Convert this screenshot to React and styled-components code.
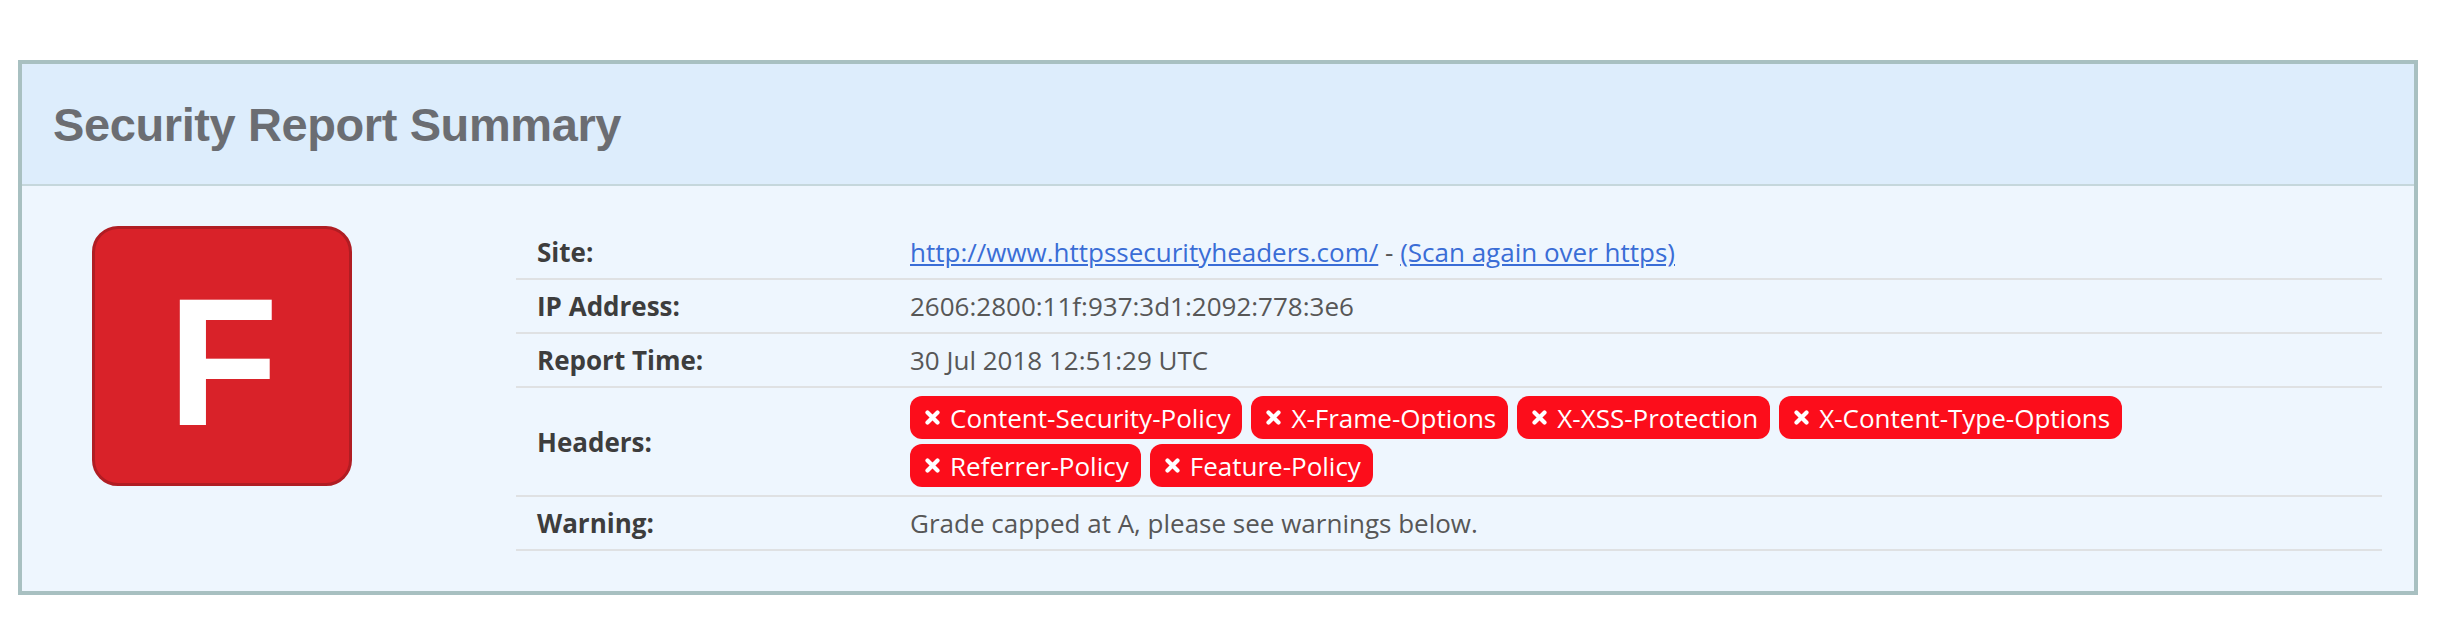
import styled, { createGlobalStyle } from "styled-components";

const GlobalStyle = createGlobalStyle`
  body {
    margin: 0;
    background: #ffffff;
    font-family: "Open Sans", "Noto Sans", sans-serif;
  }
`;

const rows = [
  { label: "Site:", kind: "site" },
  { label: "IP Address:", value: "2606:2800:11f:937:3d1:2092:778:3e6" },
  { label: "Report Time:", value: "30 Jul 2018 12:51:29 UTC" },
  { label: "Headers:", kind: "headers" },
  { label: "Warning:", value: "Grade capped at A, please see warnings below." },
];

const missingHeaders = [
  ["Content-Security-Policy", "X-Frame-Options", "X-XSS-Protection", "X-Content-Type-Options"],
  ["Referrer-Policy", "Feature-Policy"],
];

function CrossIcon() {
  return (
    <svg width="15" height="15" viewBox="0 0 15 15">
      <path d="M2.5 2.5 L12.5 12.5 M12.5 2.5 L2.5 12.5" stroke="#fff" strokeWidth="4.2" strokeLinecap="round" />
    </svg>
  );
}

export default function App() {
  return (
    <Page>
      <GlobalStyle />
      <Panel>
        <PanelHeader>
          <Title>Security Report Summary</Title>
        </PanelHeader>
        <PanelBody>
          <GradeBox>F</GradeBox>
          <ReportTable>
            {rows.map((row) => (
              <Row key={row.label}>
                <Label>{row.label}</Label>
                <Value $tall={row.kind === "headers"}>
                  {row.kind === "site" && (
                    <span>
                      <Link href="#">http://www.httpssecurityheaders.com/</Link>
                      <Sep> - </Sep>
                      <Link href="#">(Scan again over https)</Link>
                    </span>
                  )}
                  {row.kind === "headers" && (
                    <BadgeRows>
                      {missingHeaders.map((group, i) => (
                        <BadgeRow key={i}>
                          {group.map((h) => (
                            <Badge key={h}>
                              <CrossIcon />
                              {h}
                            </Badge>
                          ))}
                        </BadgeRow>
                      ))}
                    </BadgeRows>
                  )}
                  {row.value}
                </Value>
              </Row>
            ))}
          </ReportTable>
        </PanelBody>
      </Panel>
    </Page>
  );
}

// --- Styled Components ---

const Page = styled.div`
  padding: 60px 0 28px 18px;
`;

const Panel = styled.section`
  width: 2400px;
  box-sizing: border-box;
  border: 4px solid #a8c0c1;
  background: #eef6fe;
`;

const PanelHeader = styled.div`
  height: 120px;
  display: flex;
  align-items: center;
  padding-left: 31px;
  background: #ddedfc;
  border-bottom: 2px solid #c5d7dc;
`;

const Title = styled.h2`
  margin: 0;
  font-family: "Liberation Sans", Arial, sans-serif;
  font-weight: 700;
  font-size: 47px;
  letter-spacing: -0.4px;
  color: #6b6d72;
`;

const PanelBody = styled.div`
  display: flex;
  align-items: flex-start;
  gap: 164px;
  padding: 40px 32px 40px 70px;
`;

const GradeBox = styled.div`
  flex: none;
  width: 260px;
  height: 260px;
  box-sizing: border-box;
  display: flex;
  align-items: center;
  justify-content: center;
  padding: 12px 0 0 2px;
  background: #d92229;
  border: 3px solid #b01d23;
  border-radius: 26px;
  color: #ffffff;
  font-family: "Liberation Sans", Arial, sans-serif;
  font-weight: 700;
  font-size: 181px;
  line-height: 1;
`;

const ReportTable = styled.div`
  flex: 1;
  display: flex;
  flex-direction: column;
`;

const Row = styled.div`
  display: flex;
  min-height: 52px;
  border-bottom: 2px solid #dfe1e3;
`;

const Label = styled.div`
  flex: none;
  width: 353px;
  padding-left: 21px;
  display: flex;
  align-items: center;
  font-size: 26px;
  font-weight: 700;
  color: #3d3d3d;
`;

const Value = styled.div`
  flex: 1;
  display: flex;
  align-items: center;
  padding: ${(p) => (p.$tall ? "8px 20px 8px" : "0 20px")};
  font-size: 26px;
  color: #575757;
`;

const Link = styled.a`
  color: #3a6dd6;
  text-decoration: underline;
`;

const Sep = styled.span`
  color: #575757;
`;

const BadgeRows = styled.div`
  display: flex;
  flex-direction: column;
  gap: 5px;
`;

const BadgeRow = styled.div`
  display: flex;
  gap: 9px;
`;

const Badge = styled.span`
  display: inline-flex;
  align-items: center;
  gap: 10px;
  height: 43px;
  padding: 0 12px 0 15px;
  background: #fc0d1b;
  border-radius: 12px;
  color: #ffffff;
  font-size: 26px;
  white-space: nowrap;
`;
